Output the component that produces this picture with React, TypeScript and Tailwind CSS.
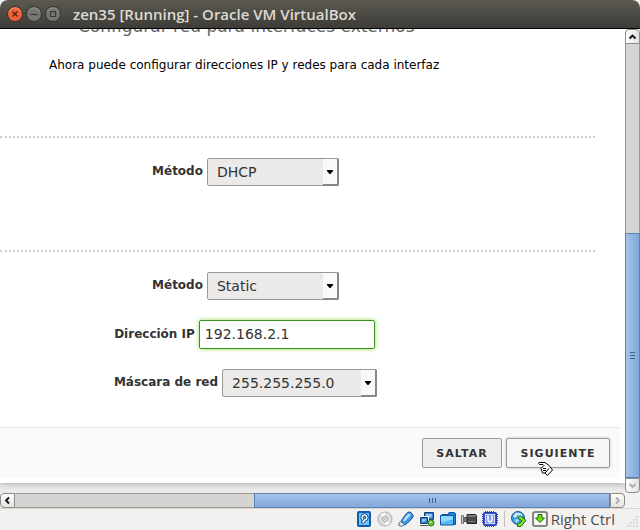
import React, { useState } from "react";

const uiFont = "font-['DejaVu_Sans','Liberation_Sans',sans-serif]";
const systemFont = "font-['Open_Sans','Noto_Sans',sans-serif]";

function WindowButton({ kind }: { kind: "close" | "min" | "max" }) {
  const close = kind === "close";
  return (
    <button type="button" aria-label={kind} className="block size-4">
      <svg viewBox="0 0 16 16" className="size-4">
        <circle cx="8" cy="8" r="7.5" fill={close ? "#ee6036" : "#777670"} stroke="#35342f" />
        <path d="M2 6a6.5 6.5 0 0 1 12 0" fill="none" stroke={close ? "#f79372" : "#969489"} />
        {close && <path d="M5.5 5.5l5 5m0-5l-5 5" stroke="#4a2415" strokeWidth="1.3" />}
        {kind === "min" && <path d="M4.5 8.5h7" stroke="#3a3934" strokeWidth="1.2" />}
        {kind === "max" && <path d="M5.5 5.5h5v5h-5z" fill="none" stroke="#3a3934" strokeWidth="1.2" />}
      </svg>
    </button>
  );
}

function TitleBar() {
  return (
    <header className="relative flex h-[29px] shrink-0 items-center rounded-t-lg border-b border-black bg-linear-to-b from-[#5b5951] to-[#3d3c38] pl-[7px]">
      <div className="flex gap-[3px]">
        <WindowButton kind="close" />
        <WindowButton kind="min" />
        <WindowButton kind="max" />
      </div>
      <h1 className={`${systemFont} ml-3 text-[15px] leading-4 font-semibold text-[#dfdbd2]`}>
        zen35 [Running] - Oracle VM VirtualBox
      </h1>
    </header>
  );
}

function SelectField(props: { id: string; label: string; options: string[]; width: string }) {
  return (
    <div className="flex items-center justify-center gap-1">
      <label htmlFor={props.id} className="pb-0.5 text-xs font-bold text-[#333]">
        {props.label}
      </label>
      <div className={`relative ${props.width}`}>
        <select
          id={props.id}
          className="block h-7 w-full appearance-none rounded-xs border border-[#999] bg-[#ebeae9] pl-[9px] text-sm text-[#333] outline-none"
        >
          {props.options.map((o) => (
            <option key={o}>{o}</option>
          ))}
        </select>
        <span className="pointer-events-none absolute inset-y-0 right-0 flex w-4 items-center justify-center rounded-r-xs border-t border-r-2 border-b-2 border-t-[#999] border-r-[#888] border-b-[#888] bg-[#f9f9f9]">
          <svg viewBox="0 0 6 4" className="h-1 w-1.5">
            <path d="M0 0h6v1L3.5 4h-1L0 1z" fill="#000" />
          </svg>
        </span>
      </div>
    </div>
  );
}

function Chevron({ d, color }: { d: string; color: string }) {
  return (
    <svg viewBox="0 0 9 9" className="size-[9px]">
      <path d={d} fill="none" stroke={color} strokeWidth="1.8" />
    </svg>
  );
}

function VerticalScrollbar() {
  return (
    <div className="flex w-[15px] shrink-0 flex-col">
      <button type="button" aria-label="Up" className="flex h-[15px] items-center justify-center rounded-t-sm border border-[#8b8b88] bg-linear-to-r from-white to-[#e3e2e0]">
        <Chevron d="M1.5 6.5l3-3 3 3" color="#111" />
      </button>
      <div className="flex min-h-0 grow flex-col border-x border-[#9b9a96] bg-[#d5d4d2]">
        <div className="basis-[189px]" />
        <div className="-mx-px flex grow flex-col items-center justify-center gap-0.5 border border-[#5f82b4] bg-linear-to-r from-[#a5c3e9] to-[#82a8da]">
          <i className="h-px w-[5px] bg-[#3f5f91]" />
          <i className="h-px w-[5px] bg-[#3f5f91]" />
          <i className="h-px w-[5px] bg-[#3f5f91]" />
        </div>
      </div>
      <button type="button" aria-label="Down" className="flex h-[15px] items-center justify-center rounded-b-sm border border-[#8b8b88] bg-linear-to-r from-white to-[#e3e2e0]">
        <Chevron d="M1.5 3l3 3 3-3" color="#aaa" />
      </button>
    </div>
  );
}

function HorizontalScrollbar() {
  return (
    <div className="mr-[15px] flex h-[15px] shrink-0">
      <button type="button" aria-label="Left" className="flex w-[15px] items-center justify-center rounded-l-sm border border-[#8b8b88] bg-linear-to-b from-white to-[#e3e2e0]">
        <Chevron d="M6 1.5l-3 3 3 3" color="#111" />
      </button>
      <div className="flex grow border-y border-[#9b9a96] bg-[#d5d4d2]">
        <div className="basis-[239px]" />
        <div className="-my-px flex grow items-center justify-center gap-0.5 border border-[#5f82b4] bg-linear-to-b from-[#a5c3e9] to-[#82a8da]">
          <i className="h-[5px] w-px bg-[#3f5f91]" />
          <i className="h-[5px] w-px bg-[#3f5f91]" />
          <i className="h-[5px] w-px bg-[#3f5f91]" />
        </div>
      </div>
      <button type="button" aria-label="Right" className="flex w-[15px] items-center justify-center rounded-r-sm border border-[#8b8b88] bg-linear-to-b from-white to-[#e3e2e0]">
        <Chevron d="M3 1.5l3 3-3 3" color="#aaa" />
      </button>
    </div>
  );
}

function HandCursor() {
  return (
    <svg viewBox="0 0 15 14" className="pointer-events-none absolute top-6 left-8 h-3.5 w-[15px]">
      <path
        d="M1 .5h6l4 3 3.5 4.5-5 5.5L7 11H4.500L4 9.500 3.500 8 3 6.500 4.500 5 6 3.500 5 2.500H1.500L.5 1.500z"
        fill="#fff"
        stroke="#000"
      />
      <path d="M5 6.500h3M5 8.500h3M7 11l4-4.500" fill="none" stroke="#000" />
    </svg>
  );
}

function StatusIcon({ children }: { children: React.ReactNode }) {
  return (
    <svg viewBox="0 0 16 16" className="size-4 shrink-0">
      {children}
    </svg>
  );
}

function StatusBar() {
  return (
    <footer className="flex h-[22px] shrink-0 items-center justify-end gap-[5px] border-t border-[#d6d4d1] bg-[#f2f1f0] pr-0.5 pb-0.5">
      <StatusIcon>
        <rect x="2" y="1" width="12" height="14" rx="1" fill="#7cc4f5" stroke="#0b5cb0" strokeWidth="2" />
        <circle cx="8.500" cy="6.500" r="3.800" fill="#d8effd" stroke="#0b4a94" />
        <circle cx="8.500" cy="6.500" r="1.200" fill="#5aa9e6" stroke="#0b4a94" />
        <path d="M8 8l-3 3.500 2.500 1L9.500 10" fill="#fff" stroke="#0b4a94" />
      </StatusIcon>
      <StatusIcon>
        <circle cx="8" cy="8" r="7" fill="#dedede" stroke="#a9a9a9" />
        <path d="M8 8L3 3.500A7 7 0 0 1 8 1.500zM8 8l5 4.500A7 7 0 0 1 8 14.500z" fill="#f7f7f7" />
        <circle cx="8" cy="8" r="2.500" fill="#eee" stroke="#a5a5a5" />
        <circle cx="8" cy="8" r=".8" fill="#999" />
      </StatusIcon>
      <StatusIcon>
        <path d="M11 .8q3 .7 4.300 4.200-1 3-4.300 5.500l-4 3.500L3 10.500 6.500 5q2-3 4.500-4.200z" fill="#3f97e0" stroke="#0a4b95" />
        <path d="M11 2.500Q8 4 5 9.500l1.500 1L12.800 4z" fill="#b9e1fb" />
        <path d="M3 10.500l3.500 3.200L4 15.300.8 14.500 1 12z" fill="#e9eef2" stroke="#456b91" />
      </StatusIcon>
      <StatusIcon>
        <path d="M5.500 1.500h9v7h-9z" fill="#2f82dc" stroke="#173a6f" />
        <path d="M7 3h6v3L7 7z" fill="#8cc6f7" />
        <path d="M8 10.500h5" stroke="#555" />
        <path d="M1.500 6.500h7v6h-7z" fill="#2f82dc" stroke="#fff" strokeWidth="3" />
        <path d="M1.500 6.500h7v6h-7z" fill="#2f82dc" stroke="#173a6f" />
        <path d="M3 8h4v2L3 11z" fill="#8cc6f7" />
        <path d="M1 14.500h8" stroke="#555" />
        <circle cx="12" cy="12" r="3" fill="#62c735" stroke="#287b12" />
        <circle cx="11.500" cy="11" r="1.300" fill="#b2ee89" />
      </StatusIcon>
      <StatusIcon>
        <path d="M1 13.500V4.500L2 3.500h6l1-2h5.500l1 1v11z" fill="#1685dc" stroke="#0759a4" />
        <path d="M.5 4.500h13v9.500H.5z" fill="#58baf5" stroke="#0759a4" />
        <path d="M1 5h12v3.500L1 11z" fill="#90d8fb" />
      </StatusIcon>
      <StatusIcon>
        <path d="M.5 4.500h2v8h-2z" fill="#ccc" stroke="#777" />
        <path d="M3 6.500h3v4H3z" fill="#888" stroke="#555" />
        <path d="M6 3.500h8.500l1 1v8H6z" fill="#4b4b4b" stroke="#252525" />
        <path d="M6.500 5h8.500" stroke="#aaa" />
        <path d="M7 10.500h7" stroke="#777" />
      </StatusIcon>
      <StatusIcon>
        <path
          d="M3.500 0v16M5.500 0v16M7.500 0v16M9.500 0v16M11.500 0v16M0 3.500h16M0 5.500h16M0 7.500h16M0 9.500h16M0 11.500h16"
          stroke="#3445c9"
        />
        <rect x="1.500" y="1.500" width="13" height="13" rx="1" fill="#4055cf" stroke="#263aae" />
        <rect x="3.500" y="3.500" width="9" height="9" fill="#7f97ec" stroke="#cfdafc" />
        <path d="M6 4.500v4c0 3 4 3 4 0v-4" fill="none" stroke="#fff" strokeWidth="1.500" />
      </StatusIcon>
      <span className="mx-px h-4 w-px bg-[#c4c2be]" />
      <StatusIcon>
        <circle cx="7" cy="7" r="6.500" fill="#3c9ce3" stroke="#15558f" />
        <path d="M2 5l3-3.500 3 1L6 5l-2 2zM7 1.500L11 3v3L8 7z" fill="#cdeafa" />
        <path d="M3.500 9L6 7.500l2 2-2 3z" fill="#a9dcf8" />
        <path d="M9 4.500l6 5-5 6H6.500V12H9l2-2-4-3z" fill="#87dc32" stroke="#1e7315" />
      </StatusIcon>
      <StatusIcon>
        <rect x="1" y="1" width="14" height="14" rx="2" fill="#eee" stroke="#666" strokeWidth="1.500" />
        <rect x="3" y="2.500" width="10" height="10" rx="1" fill="#fff" />
        <path d="M6 3.500h4V7h2.500L8 11.500 3.500 7H6z" fill="#77e00e" stroke="#17620c" />
      </StatusIcon>
      <span className={`${systemFont} -ml-0.5 text-[15px] leading-5 text-[#4c4c4c]`}>Right Ctrl</span>
      <svg viewBox="0 0 12 12" className="ml-1.5 size-3 shrink-0 self-end">
        <path
          d="M10 1h1.500M7 4h1.500M10 4h1.500M4 7h1.500M7 7h1.500M10 7h1.500M1 10h1.500M4 10h1.500M7 10h1.500M10 10h1.500"
          stroke="#c9c7c4"
          strokeWidth="1.500"
        />
      </svg>
    </footer>
  );
}

export default function App() {
  const [ip, setIp] = useState("192.168.2.1");
  return (
    <div className={`${uiFont} flex h-screen flex-col overflow-hidden bg-[#f2f1f0]`}>
      <TitleBar />
      <div className="flex min-h-0 grow">
        <main className="min-w-0 grow overflow-hidden bg-[#ebebeb]">
          <form className="bg-white pb-[5px] shadow-[0_1px_6px_#aaa]" onSubmit={(e) => e.preventDefault()}>
            <h2 className="-mt-[15px] pl-[78px] text-[17px] leading-6 text-[#666]">Configurar red para interfaces externos</h2>
            <p className="mt-[19px] pl-[49px] text-xs leading-4 text-black">
              Ahora puede configurar direcciones IP y redes para cada interfaz
            </p>
            <hr className="mt-[63px] mr-[30px] border-t-2 border-dotted border-[#ccc]" />
            <div className="pt-5 pr-[134px]">
              <SelectField id="m1" label="Método" options={["DHCP", "Static"]} width="w-[132px]" />
            </div>
            <hr className="mt-16 mr-[30px] border-t-2 border-dotted border-[#ccc]" />
            <div className="flex flex-col gap-5 pt-5 pr-[134px] pb-[30px]">
              <SelectField id="m2" label="Método" options={["Static", "DHCP"]} width="w-[132px]" />
              <div className="flex items-center justify-center gap-1 pr-0.5">
                <label htmlFor="ip" className="pb-0.5 text-xs font-bold text-[#333]">
                  Dirección IP
                </label>
                <input
                  id="ip"
                  value={ip}
                  onChange={(e) => setIp(e.target.value)}
                  className="block h-[29px] w-44 rounded-xs border border-[#3a9422] bg-white px-[5px] pb-0.5 text-sm text-[#333] shadow-[0_0_4px_#8fdc4a] outline-none"
                />
              </div>
              <SelectField id="mask" label="Máscara de red" options={["255.255.255.0", "255.255.0.0"]} width="w-[155px]" />
            </div>
            <div className="mr-[5px] flex justify-end gap-1 border-t border-[#e8e8e8] bg-[#fafafa] pt-2.5 pr-2.5 pb-2.5">
              <button
                type="button"
                className="h-[30px] w-20 rounded-xs border border-[#999] bg-[#eee] pt-0.5 text-[11px] font-bold tracking-[1px] text-[#333]"
              >
                SALTAR
              </button>
              <div className="relative">
                <button
                  type="submit"
                  className="block h-[30px] w-[104px] rounded-xs border border-[#999] bg-[#f6f6f6] pt-0.5 text-[11px] font-bold tracking-[1px] text-[#333] shadow-[0_0_3px_#bbb]"
                >
                  SIGUIENTE
                </button>
                <HandCursor />
              </div>
            </div>
          </form>
        </main>
        <VerticalScrollbar />
      </div>
      <HorizontalScrollbar />
      <StatusBar />
    </div>
  );
}
